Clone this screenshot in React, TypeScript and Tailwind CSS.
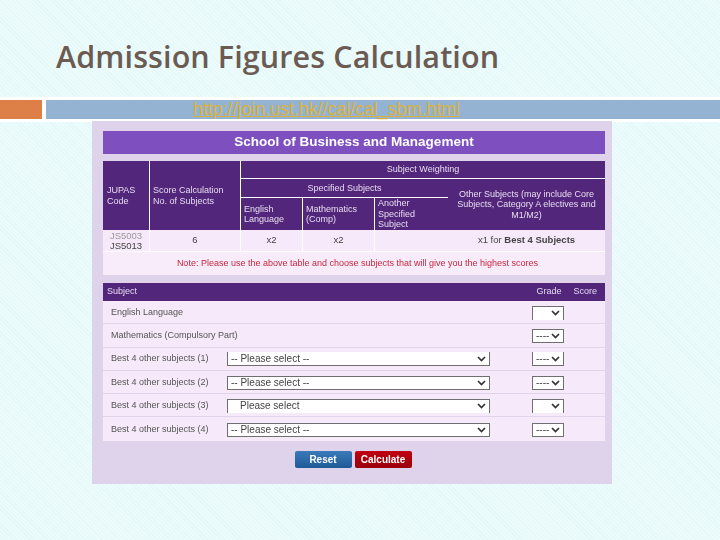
import React from "react";

const Chevron = () => (
  <svg width="9" height="6" viewBox="0 0 9 6" className="shrink-0">
    <path d="M1 1 L4.5 4.5 L8 1" fill="none" stroke="#333" strokeWidth="1.7" />
  </svg>
);

function Select({ w, text, edge, pad }: { w: string; text: string; edge: string; pad: string }) {
  return (
    <div className={`${w} ${edge} ${pad} h-[14px] bg-white border-[#6f6f6f] flex items-center justify-between pr-[3px] text-[10px] leading-none text-[#444]`}>
      <span>{text}</span>
      <Chevron />
    </div>
  );
}

const rows = [
  { label: "English Language", big: null, grade: "", gradeEdge: "border-t border-x" },
  { label: "Mathematics (Compulsory Part)", big: null, grade: "----", gradeEdge: "border" },
  { label: "Best 4 other subjects (1)", big: "-- Please select --", bigEdge: "border-x border-b", bigPad: "pl-[3px]", grade: "----", gradeEdge: "border-x border-b" },
  { label: "Best 4 other subjects (2)", big: "-- Please select --", bigEdge: "border", bigPad: "pl-[3px]", grade: "----", gradeEdge: "border" },
  { label: "Best 4 other subjects (3)", big: "Please select", bigEdge: "border-t border-x", bigPad: "pl-[12px]", grade: "", gradeEdge: "border-t border-x" },
  { label: "Best 4 other subjects (4)", big: "-- Please select --", bigEdge: "border", bigPad: "pl-[3px]", grade: "----", gradeEdge: "border" },
];

const head = "bg-[#52267a] text-[#e6dcef] text-[9px] leading-[10.5px]";
const cell = "bg-[#f6e9f9] text-[#444] text-[9.5px] flex items-center justify-center";

export default function App() {
  return (
    <div className="w-[720px] h-[540px] overflow-hidden bg-[#e8fafa] bg-[repeating-linear-gradient(45deg,#e5f8f8_0px,#e5f8f8_1px,#ecfbfb_1px,#ecfbfb_3px)] font-['Liberation_Sans',sans-serif]">
      <h1 className="pt-[36px] pl-[56px] h-[97px] text-[30.5px] leading-[40px] font-semibold text-[#6b5b53] font-['Open_Sans',sans-serif] tracking-[0.1px]">
        Admission Figures Calculation
      </h1>

      <div className="flex gap-[4px] bg-white py-[3px] h-[25px]">
        <div className="w-[42px] h-[19px] bg-[#dd8047]" />
        <div className="flex-1 h-[19px] bg-[#94b3d2] pl-[147px]">
          <a className="text-[#dcb23a] underline text-[17.8px] leading-[19px] block">http://join.ust.hk//cal/cal_sbm.html</a>
        </div>
      </div>

      <div className="ml-[92px] -mt-[1px] relative w-[520px] h-[363px] bg-[#dfd3eb] pt-[10px] pl-[11px] blur-[0.35px]">
        <div className="w-[502px] h-[23px] bg-[#7e4fbf] text-white font-bold text-[13.5px] flex items-center justify-center">
          School of Business and Management
        </div>

        <div className="mt-[7px] w-[502px] grid grid-cols-[47px_91px_62px_72px_73px_157px] grid-rows-[18px_19px_32px_22px_23px] bg-white">
          <div className={`${head} row-span-3 flex flex-col justify-center px-[4px] mr-px`}>
            <span>JUPAS</span><span>Code</span>
          </div>
          <div className={`${head} row-span-3 flex flex-col justify-center px-[3px] mr-px`}>
            <span>Score Calculation</span><span>No. of Subjects</span>
          </div>
          <div className={`${head} col-span-4 flex items-center justify-center mb-px`}>Subject Weighting</div>
          <div className={`${head} col-span-3 flex items-center justify-center mb-px`}>Specified Subjects</div>
          <div className={`${head} row-span-2 flex items-center justify-center text-center px-[5px]`}>
            Other Subjects (may include Core Subjects, Category A electives and M1/M2)
          </div>
          <div className={`${head} flex flex-col justify-center px-[3px] mr-px`}>
            <span>English</span><span>Language</span>
          </div>
          <div className={`${head} flex flex-col justify-center px-[3px] mr-px`}>
            <span>Mathematics</span><span>(Comp)</span>
          </div>
          <div className={`${head} flex flex-col justify-center px-[3px]`}>
            <span>Another</span><span>Specified</span><span>Subject</span>
          </div>

          <div className={`${cell} flex-col leading-[10px] text-[8px] mr-px mb-px`}>
            <span className="text-[#999]">JS5003</span><span>JS5013</span>
          </div>
          <div className={`${cell} mr-px mb-px`}>6</div>
          <div className={`${cell} mr-px mb-px`}>x2</div>
          <div className={`${cell} mr-px mb-px`}>x2</div>
          <div className={`${cell} col-span-2 mb-px text-[9.2px] pl-[73px]`}>
            <span>x1 for <b>Best 4 Subjects</b></span>
          </div>
          <div className="col-span-6 bg-[#f8ecfb] text-[#c8273c] text-[9px] pl-[7px] flex items-center justify-center">
            Note: Please use the above table and choose subjects that will give you the highest scores
          </div>
        </div>

        <div className="mt-[8px] w-[502px]">
          <div className="h-[18px] bg-[#52267a] text-[#e6dcef] text-[9px] flex items-center pl-[4px] pr-[8px]">
            <span className="flex-1">Subject</span>
            <span className="w-[37px]">Grade</span>
            <span>Score</span>
          </div>
          {rows.map((r) => (
            <div key={r.label} className="h-[23.3px] bg-[#f6e9f9] border-b border-[#e0d3ea] last:border-b-0 flex items-center pl-[8px] pt-px text-[9px] text-[#555]">
              <span className="w-[116px] whitespace-nowrap">{r.label}</span>
              <div className="w-[305px]">
                {r.big && <Select w="w-[263px]" text={r.big} edge={r.bigEdge!} pad={r.bigPad!} />}
              </div>
              <Select w="w-[32px]" text={r.grade} edge={r.gradeEdge} pad="pl-[3px]" />
            </div>
          ))}
        </div>

        <div className="mt-[10px] w-[500px] flex justify-center gap-[3px]">
          <button className="w-[57px] h-[17px] rounded-[2px] bg-gradient-to-b from-[#3a7ab8] to-[#1f5a98] text-white font-bold text-[10px]">Reset</button>
          <button className="w-[57px] h-[17px] rounded-[2px] bg-gradient-to-b from-[#c00010] to-[#9a000c] text-white font-bold text-[10px]">Calculate</button>
        </div>
      </div>
    </div>
  );
}
